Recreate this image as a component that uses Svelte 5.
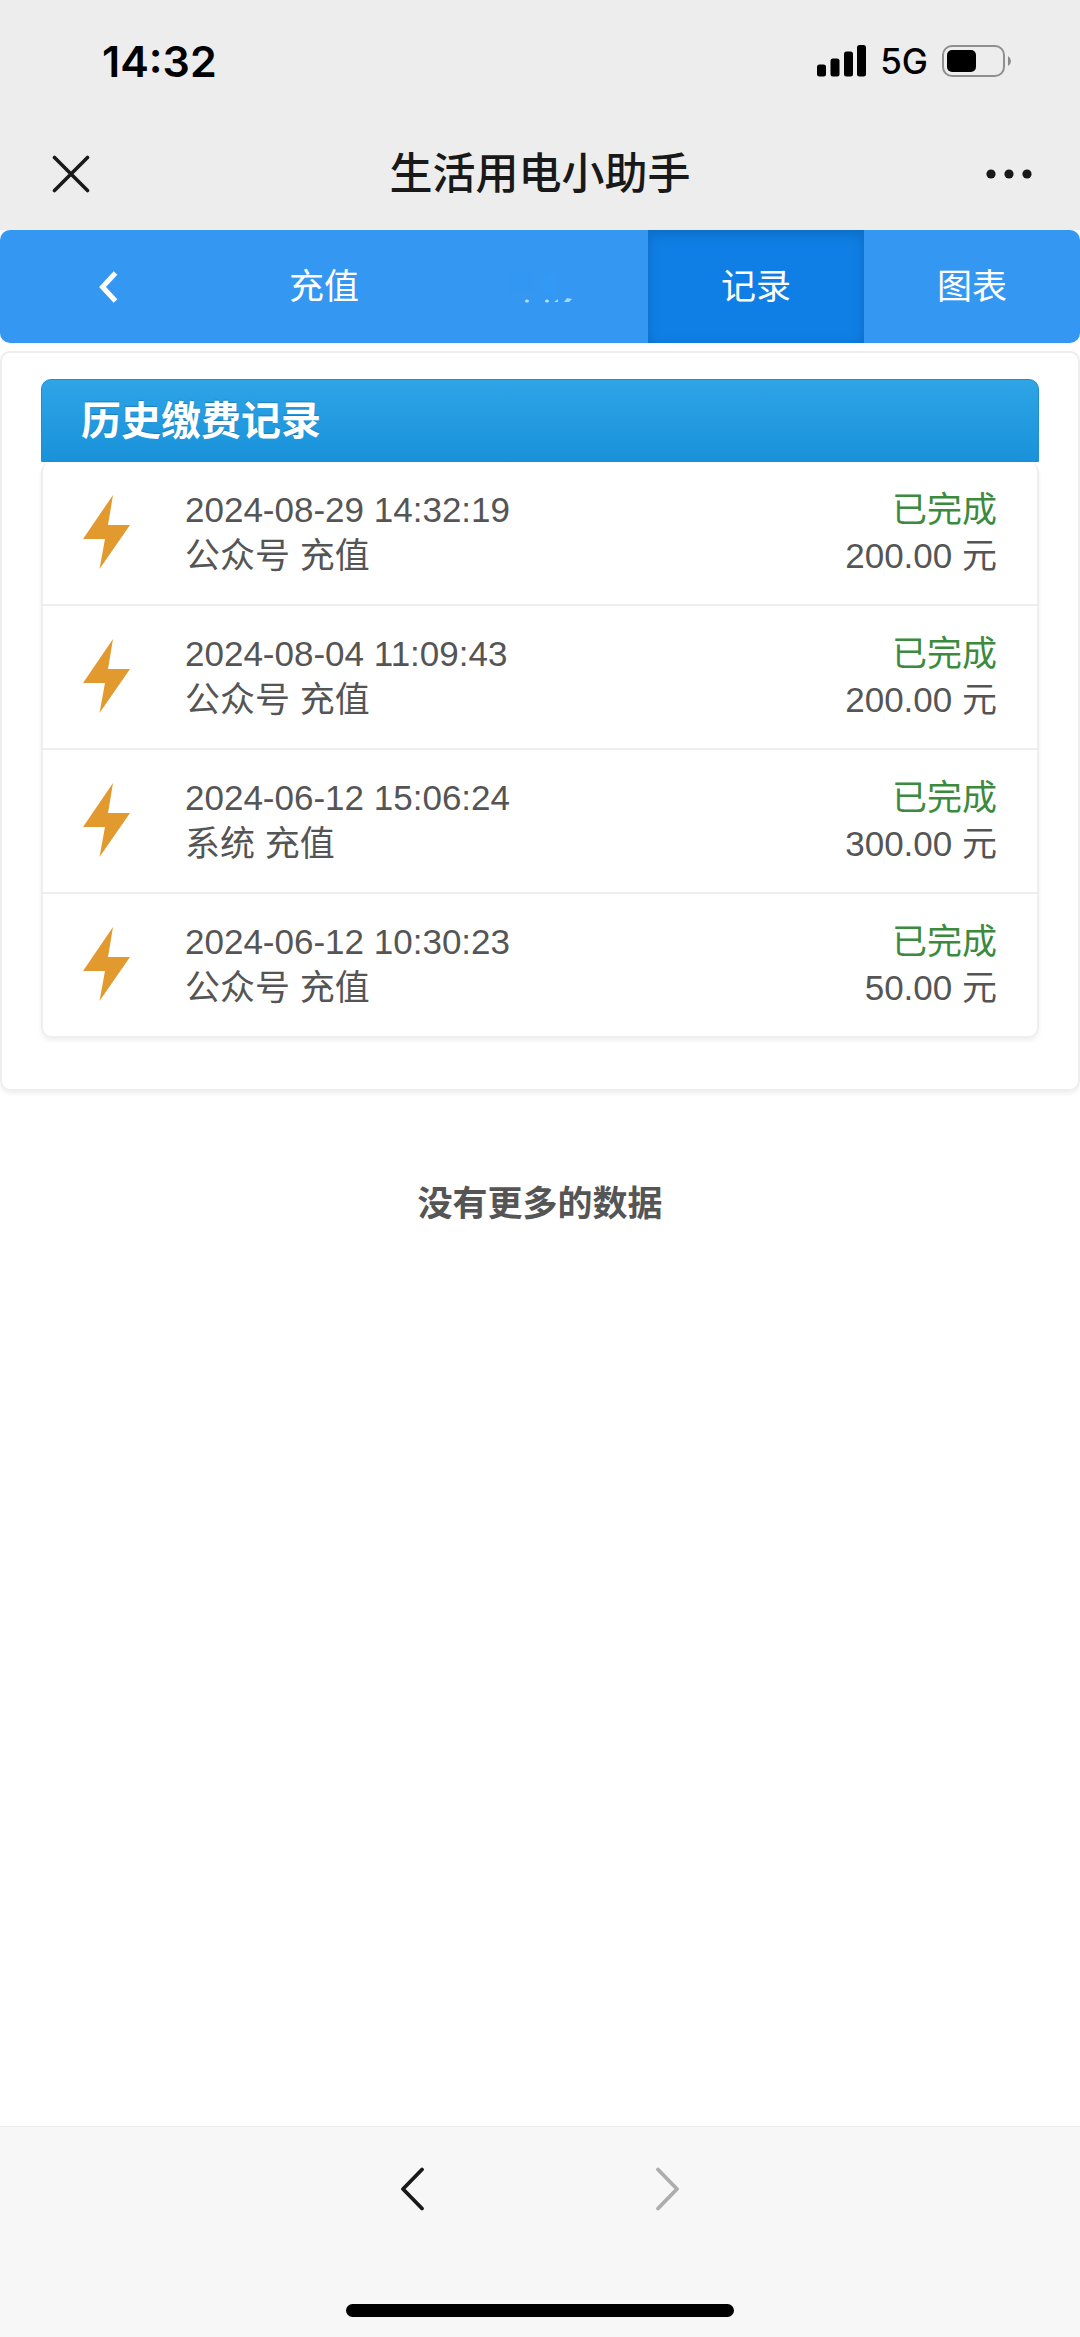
<script>
	let activeTab = $state('records');

	const records = [
		{ time: '2024-08-29 14:32:19', source: '公众号 充值', status: '已完成', amount: '200.00' },
		{ time: '2024-08-04 11:09:43', source: '公众号 充值', status: '已完成', amount: '200.00' },
		{ time: '2024-06-12 15:06:24', source: '系统 充值', status: '已完成', amount: '300.00' },
		{ time: '2024-06-12 10:30:23', source: '公众号 充值', status: '已完成', amount: '50.00' }
	];
</script>

<div class="page">
	<div class="status-bar">
		<span class="clock">14:32</span>
		<div class="status-icons">
			<svg width="49" height="32" viewBox="0 0 49 32">
				<rect x="0" y="19.5" width="9" height="12" rx="2.5" />
				<rect x="13.5" y="13.5" width="9" height="18" rx="2.5" />
				<rect x="27" y="6.5" width="9" height="25" rx="2.5" />
				<rect x="40" y="0" width="9" height="31.5" rx="2.5" />
			</svg>
			<span class="network">5G</span>
			<svg width="70" height="32" viewBox="0 0 70 32">
				<rect x="1" y="1" width="61" height="30" rx="9" fill="none" stroke="#8f8f8f" stroke-width="2" />
				<rect x="5" y="5" width="29" height="22" rx="5" />
				<path d="M66 11 Q69 13 69 16 Q69 19 66 21 Z" fill="#8a8a8a" />
			</svg>
		</div>
	</div>

	<header class="title-bar">
		<button class="icon-button close" aria-label="关闭">
			<svg width="38" height="38" viewBox="0 0 38 38" fill="none" stroke="#191919" stroke-width="3.6" stroke-linecap="round">
				<path d="M2.5 2.5 L35.5 35.5 M35.5 2.5 L2.5 35.5" />
			</svg>
		</button>
		<h1>生活用电小助手</h1>
		<button class="icon-button" aria-label="更多">
			<svg width="46" height="12" viewBox="0 0 46 12" fill="#191919">
				<circle cx="5" cy="6" r="4.6" />
				<circle cx="23" cy="6" r="4.6" />
				<circle cx="41" cy="6" r="4.6" />
			</svg>
		</button>
	</header>

	<nav class="tabs">
		<button aria-label="返回">
			<svg width="20" height="34" viewBox="0 0 20 34" fill="none" stroke="#fff" stroke-width="5">
				<path d="M17.5 3 L4.5 17 L17.5 31" />
			</svg>
		</button>
		<button class:active={activeTab === 'recharge'} onclick={() => (activeTab = 'recharge')}>充值</button>
		<button aria-label="其他">
			<svg width="70" height="36" viewBox="0 0 70 36">
				<rect x="4" y="3" width="26" height="20" rx="4" fill="#2f95f4" opacity="0.35" />
				<ellipse cx="44" cy="15" rx="8" ry="10" fill="#2ea0f8" opacity="0.3" />
				<ellipse cx="22" cy="32" rx="2" ry="1.5" fill="#b4e2fd" />
				<ellipse cx="42" cy="32" rx="2" ry="1.5" fill="#b4e2fd" />
				<path d="M49 33 L53 30 L53 33 Z" fill="#a6d9fc" />
				<path d="M59 33 L62 29 L67 30 L64 33 Z" fill="#a6d9fc" />
			</svg>
		</button>
		<button class:active={activeTab === 'records'} onclick={() => (activeTab = 'records')}>记录</button>
		<button class:active={activeTab === 'chart'} onclick={() => (activeTab = 'chart')}>图表</button>
	</nav>

	<main>
		<section class="panel">
			<h2>历史缴费记录</h2>
			<ul>
				{#each records as record}
					<li>
						<svg width="48" height="76" viewBox="0 0 48 76" fill="#e29a2f">
							<path d="M30 0 L0 44 L22 44 L16.5 74 L47 30 L25 30 Z" />
						</svg>
						<div class="detail">
							<div>{record.time}</div>
							<div>{record.source}</div>
						</div>
						<div class="result">
							<div class="done">{record.status}</div>
							<div>{record.amount} 元</div>
						</div>
					</li>
				{/each}
			</ul>
		</section>
		<p class="no-more">没有更多的数据</p>
	</main>

	<footer>
		<div class="history">
			<button aria-label="后退">
				<svg width="26" height="44" viewBox="0 0 26 44" fill="none" stroke="#191919" stroke-width="3.8" stroke-linecap="round" stroke-linejoin="round">
					<path d="M22 2.5 L3 22 L22 41.5" />
				</svg>
			</button>
			<button aria-label="前进" disabled>
				<svg width="26" height="44" viewBox="0 0 26 44" fill="none" stroke="#adadad" stroke-width="3.8" stroke-linecap="round" stroke-linejoin="round">
					<path d="M4 2.5 L23 22 L4 41.5" />
				</svg>
			</button>
		</div>
		<div class="home-indicator"></div>
	</footer>
</div>

<style>
	:global(body) {
		margin: 0;
		background: #fff;
	}

	.page {
		display: flex;
		flex-direction: column;
		min-height: 100vh;
		font-family: "Liberation Sans", "Noto Sans CJK SC", sans-serif;
		font-size: 35px;
		line-height: 46px;
		color: #555;
	}

	svg {
		display: block;
		flex: none;
	}

	button {
		display: flex;
		align-items: center;
		justify-content: center;
		padding: 0;
		border: 0;
		background: none;
		font: inherit;
		color: inherit;
	}

	.status-bar {
		display: flex;
		align-items: center;
		justify-content: space-between;
		height: 114px;
		padding: 4px 68px 0 102px;
		background: #ededed;
		color: #000;
		font-family: Inter, sans-serif;
	}

	.clock {
		font-size: 43px;
		font-weight: 600;
	}

	.status-icons {
		display: flex;
		align-items: center;
		gap: 14px;
	}

	.network {
		font-weight: 500;
	}

	.title-bar {
		display: flex;
		align-items: center;
		justify-content: space-between;
		height: 112px;
		padding: 0 48px;
		background: #ededed;
	}

	.icon-button {
		width: 46px;
		height: 46px;
	}

	h1 {
		margin: 0;
		font-size: 43px;
		font-weight: 500;
		color: #191919;
	}

	.tabs {
		display: flex;
		height: 113px;
		border-radius: 10px;
		overflow: hidden;
		background: #3498f3;
		color: #fff;
	}

	.tabs button {
		flex: 1;
	}

	.tabs .active {
		background: #0f7fe6;
		box-shadow: inset 0 4px 14px rgba(0, 0, 0, 0.16);
	}

	main {
		flex: 1;
		padding-top: 8px;
	}

	.panel {
		padding: 26px 39px 51px;
		border: 2px solid #eee;
		border-radius: 10px;
		box-shadow: 0 3px 4px rgba(0, 0, 0, 0.06);
	}

	h2 {
		margin: 0;
		padding: 18px 39px 17px;
		border: 1px solid #1c8fd0;
		border-radius: 10px 10px 0 0;
		background: linear-gradient(#2fa4e7, #1992da);
		color: #fff;
		font-size: 40px;
		font-weight: 700;
		text-shadow: 0 -1px 1px rgba(0, 0, 0, 0.2);
	}

	ul {
		margin: 0;
		padding: 0;
		list-style: none;
		border: 2px solid #eee;
		border-top: 0;
		border-radius: 10px;
		box-shadow: 0 3px 4px rgba(0, 0, 0, 0.06);
	}

	li {
		display: flex;
		align-items: center;
		padding: 25px 40px;
	}

	li + li {
		border-top: 2px solid #eee;
	}

	.detail {
		flex: 1;
		padding-left: 54px;
	}

	.result {
		text-align: right;
	}

	.done {
		color: #3c8a40;
	}

	.no-more {
		margin: 90px 0 0;
		font-weight: 700;
		text-align: center;
	}

	footer {
		display: flex;
		flex-direction: column;
		justify-content: space-between;
		align-items: center;
		height: 150px;
		padding: 40px 0 20px;
		border-top: 1px solid #ececec;
		background: #f7f7f7;
	}

	.history {
		display: flex;
		gap: 228px;
	}

	.home-indicator {
		width: 36%;
		height: 13px;
		border-radius: 7px;
		background: #000;
	}
</style>
